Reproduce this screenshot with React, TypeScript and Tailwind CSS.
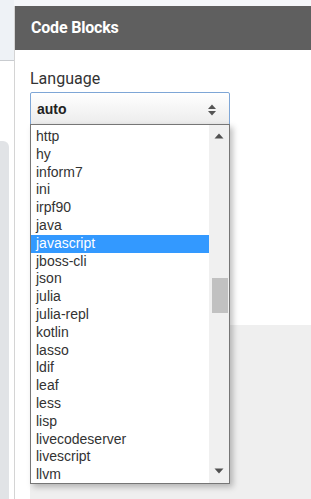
const LANGS = [
  "http", "hy", "inform7", "ini", "irpf90", "java", "javascript", "jboss-cli", "json", "julia",
  "julia-repl", "kotlin", "lasso", "ldif", "leaf", "less", "lisp", "livecodeserver", "livescript", "llvm",
];

const SELECTED = "javascript";

function UpDown() {
  return (
    <svg width="10" height="14" viewBox="0 0 10 14" className="text-[#555]">
      <path d="M1 6 L5 1.5 L9 6 Z" fill="currentColor" />
      <path d="M1 8 L5 12.5 L9 8 Z" fill="currentColor" />
    </svg>
  );
}

function Arrow({ down }: { down?: boolean }) {
  return (
    <svg width="10" height="6" viewBox="0 0 10 6">
      <path d={down ? "M0.5 0.5 L9.5 0.5 L5 5.5 Z" : "M0.5 5.5 L9.5 5.5 L5 0.5 Z"} fill="#505050" />
    </svg>
  );
}

export default function App() {
  return (
    <div className="relative w-[311px] h-[499px] overflow-hidden bg-white font-['Liberation_Sans',Arial,sans-serif]">
      {/* page behind the dialog */}
      <div className="flex h-full">
        <div className="w-[14px] flex flex-col">
          <div className="h-[61px] bg-[#eef2f6] border-b border-[#c9ccd0]" />
          <div className="h-[80px] bg-white" />
          <div className="flex-1 w-[9px] bg-[#e1e3e6] rounded-tr-[6px]" />
        </div>
        <div className="flex-1 bg-[#f5f7fa]" />
      </div>

      {/* dialog */}
      <div className="absolute left-[14px] top-[6px] right-0 bottom-0 flex flex-col border-l border-[#d4d4d4] bg-white">
        <div className="h-[44px] shrink-0 bg-[#5f5f5f] flex items-center pl-[16px]">
          <span className="text-white font-bold text-[16px] font-['Roboto',Arial,sans-serif] tracking-[-0.2px]">Code Blocks</span>
        </div>
        <div className="flex-1 flex flex-col pl-[15px]">
          <div className="pt-[19px] text-[16px] leading-[19px] text-[#333] font-['Roboto',Arial,sans-serif]">Language</div>
          <div className="mt-[4px] w-[200px] h-[35px] flex items-center justify-between pl-[6px] pr-[12px] border border-[#7ea6d6] rounded-[2px] bg-gradient-to-b from-white to-[#ebebeb]">
            <span className="font-bold text-[14px] text-[#222]">auto</span>
            <UpDown />
          </div>
          <div className="h-[198px] shrink-0" />
          <div className="flex-1 bg-[#efefef]" />
        </div>
      </div>

      {/* open list */}
      <div className="absolute left-[30px] top-[124px] w-[200px] h-[360px] flex border border-[#767676] bg-white shadow-[3px_3px_6px_rgba(0,0,0,0.25)]">
        <div className="flex-1 overflow-hidden pt-[3px]">
          {LANGS.map(l => (
            <div
              key={l}
              className={`h-[17.8px] leading-[17.8px] pl-[5px] text-[14px] ${l === SELECTED ? "bg-[#3399ff] text-white" : "text-[#333]"}`}
            >
              {l}
            </div>
          ))}
        </div>
        <div className="w-[20px] bg-[#f0f0f0] flex flex-col items-center">
          <div className="h-[18px] flex items-center justify-center pt-[4px]"><Arrow /></div>
          <div className="h-[135px]" />
          <div className="w-[16px] h-[35px] bg-[#c1c1c1] ml-[2px]" />
          <div className="flex-1" />
          <div className="h-[18px] flex items-center justify-center pb-[6px]"><Arrow down /></div>
        </div>
      </div>
    </div>
  );
}
